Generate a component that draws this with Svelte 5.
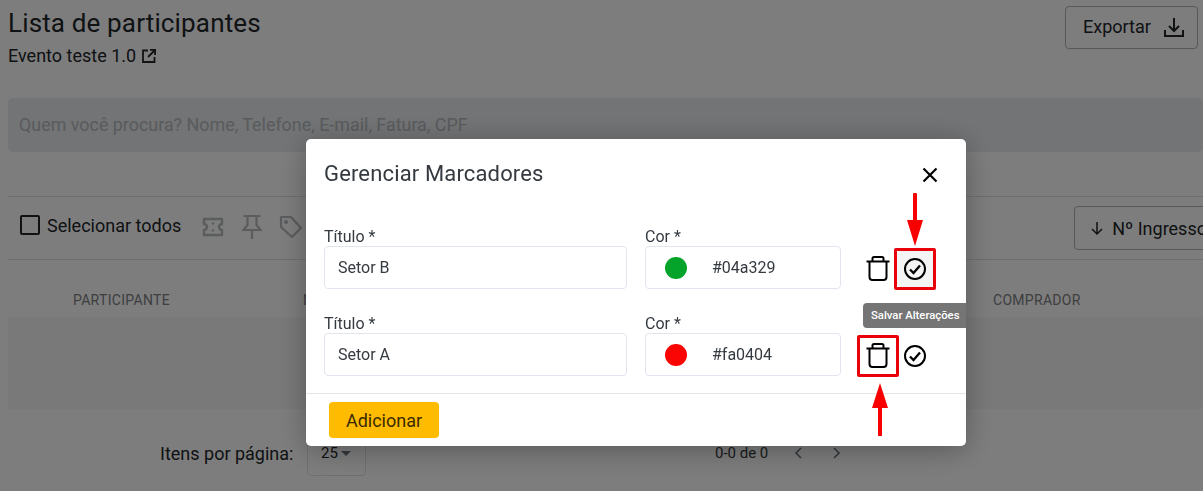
<script>
  const columns = [
    { name: 'PARTICIPANTE', width: 230 },
    { name: 'N', width: 690 },
    { name: 'COMPRADOR', width: 0 }
  ];

  const markers = [
    { title: 'Setor B', color: '#04a329' },
    { title: 'Setor A', color: '#fa0404' }
  ];
</script>

<div class="page">
  <header class="top">
    <div>
      <h1>Lista de participantes</h1>
      <div class="event">
        Evento teste 1.0
        <svg width="16" height="16" viewBox="0 0 16 16" fill="none" stroke="currentColor" stroke-width="1.8">
          <path d="M7 2.500H2v11.500h11.500V9" />
          <path d="M9 1.900h5.100V7M14 2l-7 7" />
        </svg>
      </div>
    </div>
    <button class="export">
      Exportar
      <svg width="24" height="24" viewBox="0 0 24 24" fill="none" stroke="currentColor" stroke-width="2">
        <path d="M3 15v6h18v-6" />
        <path d="M12 3v13M7 11l5 5 5-5" />
      </svg>
    </button>
  </header>

  <div class="search">Quem você procura? Nome, Telefone, E-mail, Fatura, CPF</div>

  <div class="toolbar">
    <span class="checkbox"></span>
    <span class="select-all">Selecionar todos</span>
    <svg class="tool" width="24" height="24" viewBox="0 0 24 24" fill="none" stroke="currentColor" stroke-width="2.400" stroke-linejoin="round">
      <path d="M3 4h18v5a3 3 0 0 0 0 6v5H3v-5a3 3 0 0 0 0-6z" />
      <path d="M12 7.500v2M12 14.500v2" />
    </svg>
    <svg class="tool" width="24" height="24" viewBox="0 0 24 24" fill="none" stroke="currentColor" stroke-width="2.200">
      <path d="M3.500 1h17M7.500 1v9l-4 5h17l-4-5V1M12 15v9" />
    </svg>
    <svg class="tool" width="24" height="24" viewBox="0 0 24 24" fill="none" stroke="currentColor" stroke-width="2.200" stroke-linejoin="round">
      <path d="M2 2h10l10 11-9 9L2 12z" />
      <circle cx="7" cy="7" r="1" />
    </svg>
    <button class="sort">
      <svg width="16" height="16" viewBox="0 0 16 16" fill="none" stroke="currentColor" stroke-width="1.500">
        <path d="M8 2v12M3 9l5 5 5-5" />
      </svg>
      Nº Ingresso
    </button>
  </div>

  <div class="table-head">
    {#each columns as col}
      <span style="width:{col.width}px">{col.name}</span>
    {/each}
  </div>
  <div class="table-body"></div>

  <footer class="pagination">
    <span class="per-page">Itens por página:</span>
    <span class="page-size">25<i class="caret"></i></span>
    <span class="range">0-0 de 0</span>
    <svg width="16" height="16" viewBox="0 0 16 16" fill="none" stroke="currentColor" stroke-width="1.600">
      <path d="M10 3L5 8l5 5" />
    </svg>
    <svg class="next" width="16" height="16" viewBox="0 0 16 16" fill="none" stroke="currentColor" stroke-width="1.600">
      <path d="M6 3l5 5-5 5" />
    </svg>
  </footer>
</div>

<div class="overlay">
  <div class="modal">
    <div class="modal-head">
      <h2>Gerenciar Marcadores</h2>
      <svg class="close" width="24" height="24" viewBox="0 0 24 24" fill="none" stroke="#000" stroke-width="2.200">
        <path d="M5.500 5.500l13 13M18.500 5.500l-13 13" />
      </svg>
    </div>

    <div class="rows">
      {#each markers as m, i}
        <div class="row">
          <label class="field title">
            <span>Título *</span>
            <div class="input">{m.title}</div>
          </label>
          <label class="field color">
            <span>Cor *</span>
            <div class="input">
              <i class="dot" style="background:{m.color}"></i>
              {m.color}
            </div>
          </label>
          <div class="actions">
            <button class="icon" aria-label="Excluir">
              <svg width="24" height="25" viewBox="0 0 24 25" fill="none" stroke="#000" stroke-width="2">
                <path d="M0.500 5.500h23" />
                <path d="M6.500 5V2.500a1.500 1.500 0 0 1 1.500-1.500h8a1.500 1.500 0 0 1 1.500 1.500V5" />
                <path d="M3.500 5.500V21a3 3 0 0 0 3 3h11a3 3 0 0 0 3-3V5.500" />
              </svg>
            </button>
            <button class="icon" class:hover={i === 0} aria-label="Salvar">
              <svg width="24" height="24" viewBox="0 0 24 24" fill="none" stroke="#000" stroke-width="2">
                <circle cx="12" cy="12" r="10" />
                <path d="M7 12.500l3.500 3.500L17 8.500" stroke-width="2.300" />
              </svg>
            </button>
          </div>
        </div>
      {/each}
    </div>

    <div class="modal-foot">
      <button class="add">Adicionar</button>
    </div>

    <div class="tooltip">Salvar Alterações</div>
  </div>

  <!-- anotacoes vermelhas da captura -->
  <span class="mark mark-save"></span>
  <span class="mark mark-trash"></span>
  <svg class="arrow arrow-down" width="16" height="53" viewBox="0 0 16 53" fill="#f80000">
    <path d="M6 1.500a2 2 0 0 1 4 0V27h6L8 53 0 27h6z" />
  </svg>
  <svg class="arrow arrow-up" width="16" height="53" viewBox="0 0 16 53" fill="#f80000">
    <path d="M6 51.500a2 2 0 0 0 4 0V25h6L8 0 0 25h6z" />
  </svg>
</div>

<style>
  :global(body) {
    margin: 0;
    font-family: Roboto, "Liberation Sans", sans-serif;
    color: #212529;
    background: #fff;
    overflow: hidden;
  }

  .page {
    width: 1203px;
    height: 491px;
    box-sizing: border-box;
    padding-left: 8px;
    overflow: hidden;
  }

  .top {
    display: flex;
    justify-content: space-between;
    align-items: flex-start;
    height: 98px;
    padding: 6px 5px 0 0;
    box-sizing: border-box;
  }

  h1 {
    margin: 2px 0 0;
    font-size: 26px;
    line-height: 30px;
    font-weight: 400;
    letter-spacing: 0.15px;
  }

  .event {
    display: flex;
    align-items: center;
    gap: 5px;
    margin-top: 7px;
    font-size: 18px;
    line-height: 22px;
  }

  button {
    font-family: inherit;
  }

  .export {
    display: flex;
    align-items: center;
    gap: 11px;
    height: 43px;
    width: 133px;
    padding: 0 0 2px 17px;
    box-sizing: border-box;
    border: 1px solid #adb5bd;
    border-radius: 4px;
    background: none;
    color: #212529;
    font-size: 18px;
  }

  .search {
    height: 54px;
    line-height: 54px;
    padding-left: 11px;
    border-radius: 5px;
    background: #e9ecef;
    color: #b6babe;
    font-size: 17.900px;
  }

  .toolbar {
    display: flex;
    align-items: center;
    height: 64px;
    margin-top: 44px;
    padding: 0 0 6px 12px;
    border-top: 1px solid #dee2e6;
    border-bottom: 1px solid #dee2e6;
    box-sizing: border-box;
  }

  .toolbar > * {
    flex: none;
  }

  .checkbox {
    width: 16px;
    height: 16px;
    border: 2px solid #212529;
    border-radius: 2px;
    margin-right: 7px;
  }

  .select-all {
    font-size: 18px;
    margin-right: 20px;
    white-space: nowrap;
  }

  .tool {
    color: #b8bbbf;
    margin: 4px 15px 0 0;
  }

  .sort {
    display: flex;
    align-items: center;
    gap: 7px;
    height: 44px;
    width: 140px;
    margin: 6px 0 0 756px;
    padding: 0 0 0 14px;
    box-sizing: border-box;
    border: 1px solid #adb5bd;
    border-radius: 4px;
    background: none;
    color: #212529;
    font-size: 18px;
    white-space: nowrap;
  }

  .table-head {
    display: flex;
    height: 57px;
    padding: 32px 0 0 65px;
    box-sizing: border-box;
    color: #7d8084;
    font-size: 14px;
    letter-spacing: 0.3px;
    line-height: 16px;
  }

  .table-head span {
    flex: none;
  }

  .table-body {
    height: 92px;
    background: #f7f7f7;
  }

  .pagination {
    display: flex;
    align-items: center;
    height: 46px;
    margin-top: 21px;
    padding-left: 152px;
    font-size: 18px;
  }

  .per-page {
    width: 147px;
  }

  .page-size {
    display: flex;
    align-items: center;
    gap: 3px;
    width: 59px;
    height: 46px;
    padding-left: 13px;
    box-sizing: border-box;
    border: 1px solid #dee2e6;
    border-radius: 4px;
    font-size: 15px;
  }

  .caret {
    border-left: 5px solid transparent;
    border-right: 5px solid transparent;
    border-top: 5px solid #6c757d;
  }

  .range {
    width: 76px;
    margin-left: 349px;
    font-size: 15px;
    color: #343a40;
  }

  .pagination svg {
    color: #6c757d;
  }

  .pagination .next {
    margin-left: 21px;
  }

  .overlay {
    position: fixed;
    inset: 0;
    padding: 139px 0 0 306px;
    box-sizing: border-box;
    background: rgba(0, 0, 0, 0.51);
  }

  .modal {
    position: relative;
    width: 660px;
    height: 307px;
    overflow: hidden;
    border-radius: 5px;
    background: #fff;
    box-shadow: 0 4px 30px rgba(0, 0, 0, 0.3);
  }

  .modal-head {
    display: flex;
    justify-content: space-between;
    height: 89px;
    padding: 22px 24px 0 18px;
    box-sizing: border-box;
  }

  h2 {
    margin: 0;
    font-size: 22px;
    line-height: 26px;
    font-weight: 400;
    letter-spacing: 0.15px;
    color: #343a40;
  }

  .close {
    margin-top: 2px;
  }

  .rows {
    display: flex;
    flex-direction: column;
    gap: 26px;
    padding: 0 0 0 18px;
    height: 165px;
    box-sizing: border-box;
  }

  .row {
    display: flex;
    align-items: flex-end;
    gap: 18px;
  }

  .field {
    display: block;
    flex: none;
    font-size: 16px;
    line-height: 18px;
    color: #343a40;
  }

  .field.title {
    width: 303px;
  }

  .field.color {
    width: 196px;
  }

  .input {
    display: flex;
    align-items: center;
    height: 43px;
    padding-left: 13px;
    box-sizing: border-box;
    border: 1px solid #e3e5ee;
    border-radius: 4px;
    font-size: 16px;
    color: #343a40;
  }

  .field.color .input {
    padding-left: 19px;
  }

  .dot {
    width: 22px;
    height: 22px;
    margin-right: 25px;
    border-radius: 50%;
  }

  .actions {
    display: flex;
    height: 43px;
    align-items: center;
    margin-left: 1px;
    padding-top: 2px;
    box-sizing: border-box;
    gap: 1px;
  }

  .icon {
    display: flex;
    align-items: center;
    justify-content: center;
    width: 36px;
    height: 36px;
    padding: 0;
    border: 0;
    border-radius: 4px;
    background: none;
  }

  .icon.hover {
    background: #f4f4f4;
  }

  .modal-foot {
    height: 53px;
    padding: 8px 0 0 23px;
    box-sizing: border-box;
    border-top: 1px solid #e3e5e8;
  }

  .add {
    width: 110px;
    height: 36px;
    padding: 0;
    border: 0;
    border-radius: 4px;
    background: #ffbb00;
    color: #3a2a00;
    font-size: 18px;
  }

  .tooltip {
    position: absolute;
    left: 557px;
    top: 164px;
    padding: 0 14px 0 8px;
    height: 25px;
    line-height: 25px;
    border-radius: 4px;
    background: #757575;
    color: #fff;
    font-size: 11.300px;
    font-weight: 500;
    white-space: nowrap;
  }

  .mark {
    position: absolute;
    width: 42px;
    height: 42px;
    box-sizing: border-box;
    border: 3px solid #e8000b;
    border-radius: 2px;
  }

  .mark-save {
    left: 894px;
    top: 248px;
  }

  .mark-trash {
    left: 857px;
    top: 335px;
  }

  .arrow {
    position: absolute;
  }

  .arrow-down {
    left: 907px;
    top: 193px;
  }

  .arrow-up {
    left: 872px;
    top: 383px;
  }
</style>
